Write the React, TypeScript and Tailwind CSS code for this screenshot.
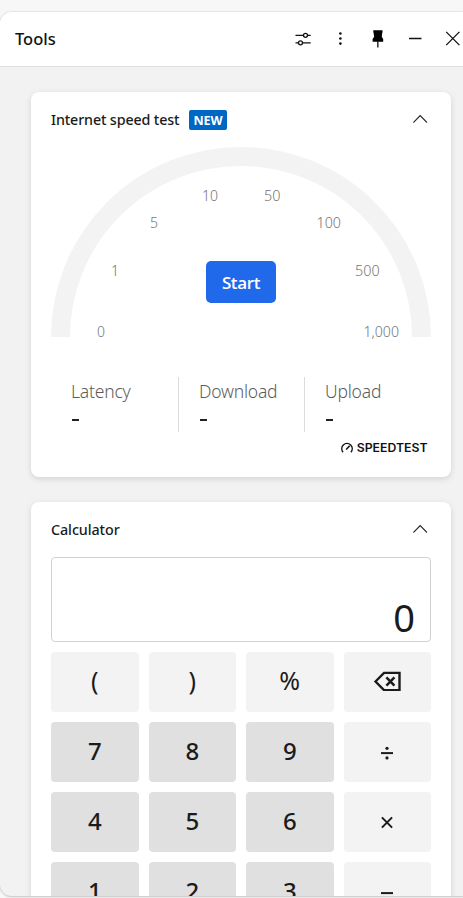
import React from "react";

type Mark = { text: string; x: number; y: number; width: number };

const marks: Mark[] = [
  { text: "0", x: 97, y: 337, width: 8 },
  { text: "1", x: 111, y: 276, width: 8 },
  { text: "5", x: 150, y: 228, width: 8 },
  { text: "10", x: 202, y: 201, width: 16 },
  { text: "50", x: 264, y: 201, width: 16.4 },
  { text: "100", x: 316.5, y: 228, width: 24.4 },
  { text: "500", x: 355, y: 276, width: 24.6 },
  { text: "1,000", x: 363.5, y: 337, width: 35.5 },
];

function Chevron() {
  return (
    <svg className="mr-[3px] mb-[2px] h-4 w-4" viewBox="0 0 16 16" fill="none" stroke="#242424" strokeWidth="1.2" strokeLinecap="round">
      <path d="M1.8 11.2 8.2 4.6 14.6 11.2" />
    </svg>
  );
}

function Gauge() {
  return (
    <div className="relative h-[190px] w-[380px]">
      <svg className="block h-[200px] w-[380px]" viewBox="51 147 380 200">
        <path d="M60.5 337a180.5 180.5 0 0 1 361 0" fill="none" stroke="#f3f3f3" strokeWidth="19" />
        <g fill="#757575" fontSize="15.4" fontFamily="'Noto Sans', sans-serif" fontWeight="350">
          {marks.map((m) => (
            <text key={m.text} x={m.x} y={m.y} textLength={m.width} lengthAdjust="spacingAndGlyphs">
              {m.text}
            </text>
          ))}
        </g>
      </svg>
      <button className="absolute left-[155px] top-[114px] h-[42px] w-[70px] rounded-[5px] bg-[#2169eb] text-[17px] font-semibold leading-[43px] tracking-[-0.35px] text-white">
        Start
      </button>
    </div>
  );
}

function Stat({ label, className }: { label: string; className: string }) {
  return (
    <div className={"h-[55px] " + className}>
      <div className="h-[28px] font-['Noto_Sans',sans-serif] text-[17.5px] font-light leading-[28px] tracking-[-0.2px] text-[#5c5c5c]">{label}</div>
      <div className="mt-[9px] ml-[1px] h-[12px] pt-[5px]">
        <div className="h-[2px] w-[7px] bg-[#222]" />
      </div>
    </div>
  );
}

function Key({ children, light }: { children: React.ReactNode; light?: boolean }) {
  return (
    <button
      className={
        "flex h-[60px] items-center justify-center rounded-[4px] pb-[2px] text-[#1b1b1b] " +
        (light ? "bg-[#f3f3f3] font-['Noto_Sans',sans-serif] text-[25px] font-normal" : "bg-[#e0e0e0] font-['Noto_Sans',sans-serif] text-[24px] font-medium")
      }
    >
      {children}
    </button>
  );
}

function Divide() {
  return (
    <svg className="mt-1 h-4 w-4" viewBox="0 0 16 16" fill="#1b1b1b">
      <path d="M2 7.1h12v2H2z" />
      <circle cx="8" cy="3.3" r="1.6" />
      <circle cx="8" cy="12.9" r="1.6" />
    </svg>
  );
}

export default function App() {
  return (
    <div className="flex h-[898px] w-[463px] flex-col overflow-hidden bg-[#f7f7f7] pt-[12px] font-['Open_Sans',sans-serif]">
      <div className="flex h-[885px] shrink-0 flex-col overflow-hidden rounded-l-[12px] border-b border-[#d2d2d2] bg-[#f2f2f2] shadow-[0_0_2px_#bbb]">
        <header className="flex h-[55px] shrink-0 items-center justify-between border-b border-[#e0e0e0] bg-white pl-[15px]">
          <h1 className="pb-px font-['Noto_Sans',sans-serif] text-[16.5px] font-medium leading-6 text-[#111]">Tools</h1>
          <div className="flex h-full items-center">
            <svg className="h-[54px] w-[170px]" viewBox="293 12 170 54" fill="none" stroke="#111" strokeWidth="1.3">
              <path d="M295.5 35.3h7.6m4.6 0h3M295.5 42.8h2.7m4.6 0h7.9" />
              <circle cx="305.5" cy="35.3" r="2" />
              <circle cx="300.5" cy="42.8" r="2" />
              <g fill="#111" stroke="none">
                <circle cx="340.4" cy="33.5" r="1.3" />
                <circle cx="340.4" cy="38.5" r="1.3" />
                <circle cx="340.4" cy="43.6" r="1.3" />
                <path d="M373.6 30.3h8.5q.6 0 .5.6l-.8 5.2q-.1.8.4 1.4l1 1.5v2.8h-10.6v-2.8l1.1-1.5q.5-.6.4-1.4l-.9-5.2q0-.6.4-.6z" fill="#000" />
                <path d="M377.2 41h1.3v6.5h-1.3z" />
              </g>
              <path d="M409 38.5h12.5M446.2 31.9l13.2 13.2M459.4 31.9l-13.2 13.2" />
            </svg>
          </div>
        </header>
        <main className="flex flex-col gap-[25px] pl-[31px] pt-[25px]">
          <section className="h-[385px] w-[420px] rounded-[8px] bg-white px-5 shadow-[0_2px_6px_rgba(0,0,0,0.13)]">
            <div className="flex h-[55px] items-center">
              <h2 className="w-[128px] whitespace-nowrap font-['Noto_Sans',sans-serif] text-[14.3px] font-medium tracking-[-0.14px] text-[#1b1b1b]">Internet speed test</h2>
              <span className="ml-[10px] h-5 w-[38px] rounded-[2px] bg-[#0067c4] text-center text-[12.5px] font-bold leading-[21px] text-white">NEW</span>
              <span className="ml-auto">
                <Chevron />
              </span>
            </div>
            <Gauge />
            <div className="mt-[40px] flex">
              <Stat label="Latency" className="w-[127px] pl-5" />
              <Stat label="Download" className="w-[126px] border-l border-[#dcdcdc] pl-5" />
              <Stat label="Upload" className="w-[127px] border-l border-[#dcdcdc] pl-5" />
            </div>
            <div className="mt-[8px] flex h-4 items-center justify-end pr-[3px]">
              <svg className="h-4 w-[88px]" viewBox="340 440 88 16">
                <path d="M343.1 452.3a5.3 5.3 0 1 1 7.8 0" fill="none" stroke="#111" strokeWidth="1.3" />
                <path d="m346.2 449.6 3.5-3.9" stroke="#111" strokeWidth="1.5" />
                <text x="356.7" y="452" textLength="70.8" lengthAdjust="spacingAndGlyphs" fontFamily="Inter, sans-serif" fontWeight="600" fontSize="11.2" fill="#111">
                  SPEEDTEST
                </text>
              </svg>
            </div>
          </section>
          <section className="h-[500px] w-[420px] shrink-0 rounded-t-[8px] bg-white px-5 shadow-[0_2px_6px_rgba(0,0,0,0.13)]">
            <div className="flex h-[55px] items-center justify-between">
              <h2 className="font-['Noto_Sans',sans-serif] text-[14.3px] font-medium tracking-[-0.08px] text-[#1b1b1b]">Calculator</h2>
              <Chevron />
            </div>
            <div className="flex h-[85px] items-end justify-end rounded-[4px] border border-[#d1d1d1] pb-[4px] pr-[15px] font-['Noto_Sans',sans-serif] text-[38px] leading-[40px] text-[#1b1b1b]">0</div>
            <div className="mt-[10px] grid grid-cols-4 gap-[10px]">
              <Key light>(</Key>
              <Key light>)</Key>
              <Key light>%</Key>
              <Key light>
                <svg className="h-5 w-7" viewBox="0 0 28 20" fill="none" stroke="#1b1b1b">
                  <path d="M2.5 10.5 11 1.9h15.5v17.2H11z" strokeWidth="2.4" />
                  <path d="m13.4 6.4 8 8.2m0-8.2-8 8.2" strokeWidth="2.5" />
                </svg>
              </Key>
              <Key>7</Key>
              <Key>8</Key>
              <Key>9</Key>
              <Key light>
                <Divide />
              </Key>
              <Key>4</Key>
              <Key>5</Key>
              <Key>6</Key>
              <Key light>
                <svg className="mt-1 h-4 w-4" viewBox="0 0 16 16" fill="none" stroke="#1b1b1b" strokeWidth="2">
                  <path d="m2.9 2.4 10.2 10.2m0-10.2L2.9 12.6" />
                </svg>
              </Key>
              <Key>1</Key>
              <Key>2</Key>
              <Key>3</Key>
              <Key light>
                <svg className="mt-1 h-4 w-4" viewBox="0 0 16 16" fill="#1b1b1b">
                  <path d="M2 7.1h12v2H2z" />
                </svg>
              </Key>
            </div>
          </section>
        </main>
      </div>
    </div>
  );
}
